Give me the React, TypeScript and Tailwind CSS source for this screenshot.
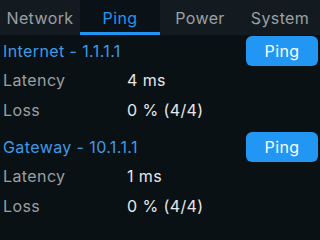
import React from "react";

const tabs = ["Network", "Ping", "Power", "System"];

const targets = [
  { name: "Internet - 1.1.1.1", latency: "4 ms", loss: "0 % (4/4)" },
  { name: "Gateway - 10.1.1.1", latency: "1 ms", loss: "0 % (4/4)" },
];

export default function App() {
  return (
    <div
      className="w-[320px] h-[240px] bg-[#0a1114] overflow-hidden text-[16px] tracking-[0.4px]"
      style={{ fontFamily: "Inter, 'Noto Sans', sans-serif" }}
    >
      {/* Tab bar */}
      <div className="flex h-[35px] bg-[#141b20]">
        {tabs.map((t) => (
          <div
            key={t}
            className={`flex-1 flex items-center justify-center ${
              t === "Ping" ? "bg-[#0b1217] text-[#2196f3] border-b-[3px] border-[#2196f3] pt-[3px]" : "text-[#9aa0a4]"
            }`}
          >
            {t}
          </div>
        ))}
      </div>

      {/* Ping targets */}
      <div className="flex flex-col gap-[6px] pt-[1px]">
        {targets.map((tg) => (
          <div key={tg.name} className="flex flex-col">
            <div className="flex items-center justify-between h-[30px] pl-[3px] pr-[2px]">
              <span className="text-[#3d9be9]">{tg.name}</span>
              <button className="w-[72px] h-[30px] rounded-[6px] bg-[#2196f3] text-white tracking-[0.4px]">Ping</button>
            </div>
            <div className="flex items-center h-[28px] pl-[3px]">
              <span className="w-[124px] text-[#9aa0a4]">Latency</span>
              <span className="text-[#e6e8e9]">{tg.latency}</span>
            </div>
            <div className="flex items-center h-[32px] pl-[3px]">
              <span className="w-[124px] text-[#9aa0a4]">Loss</span>
              <span className="text-[#e6e8e9]">{tg.loss}</span>
            </div>
          </div>
        ))}
      </div>
    </div>
  );
}
